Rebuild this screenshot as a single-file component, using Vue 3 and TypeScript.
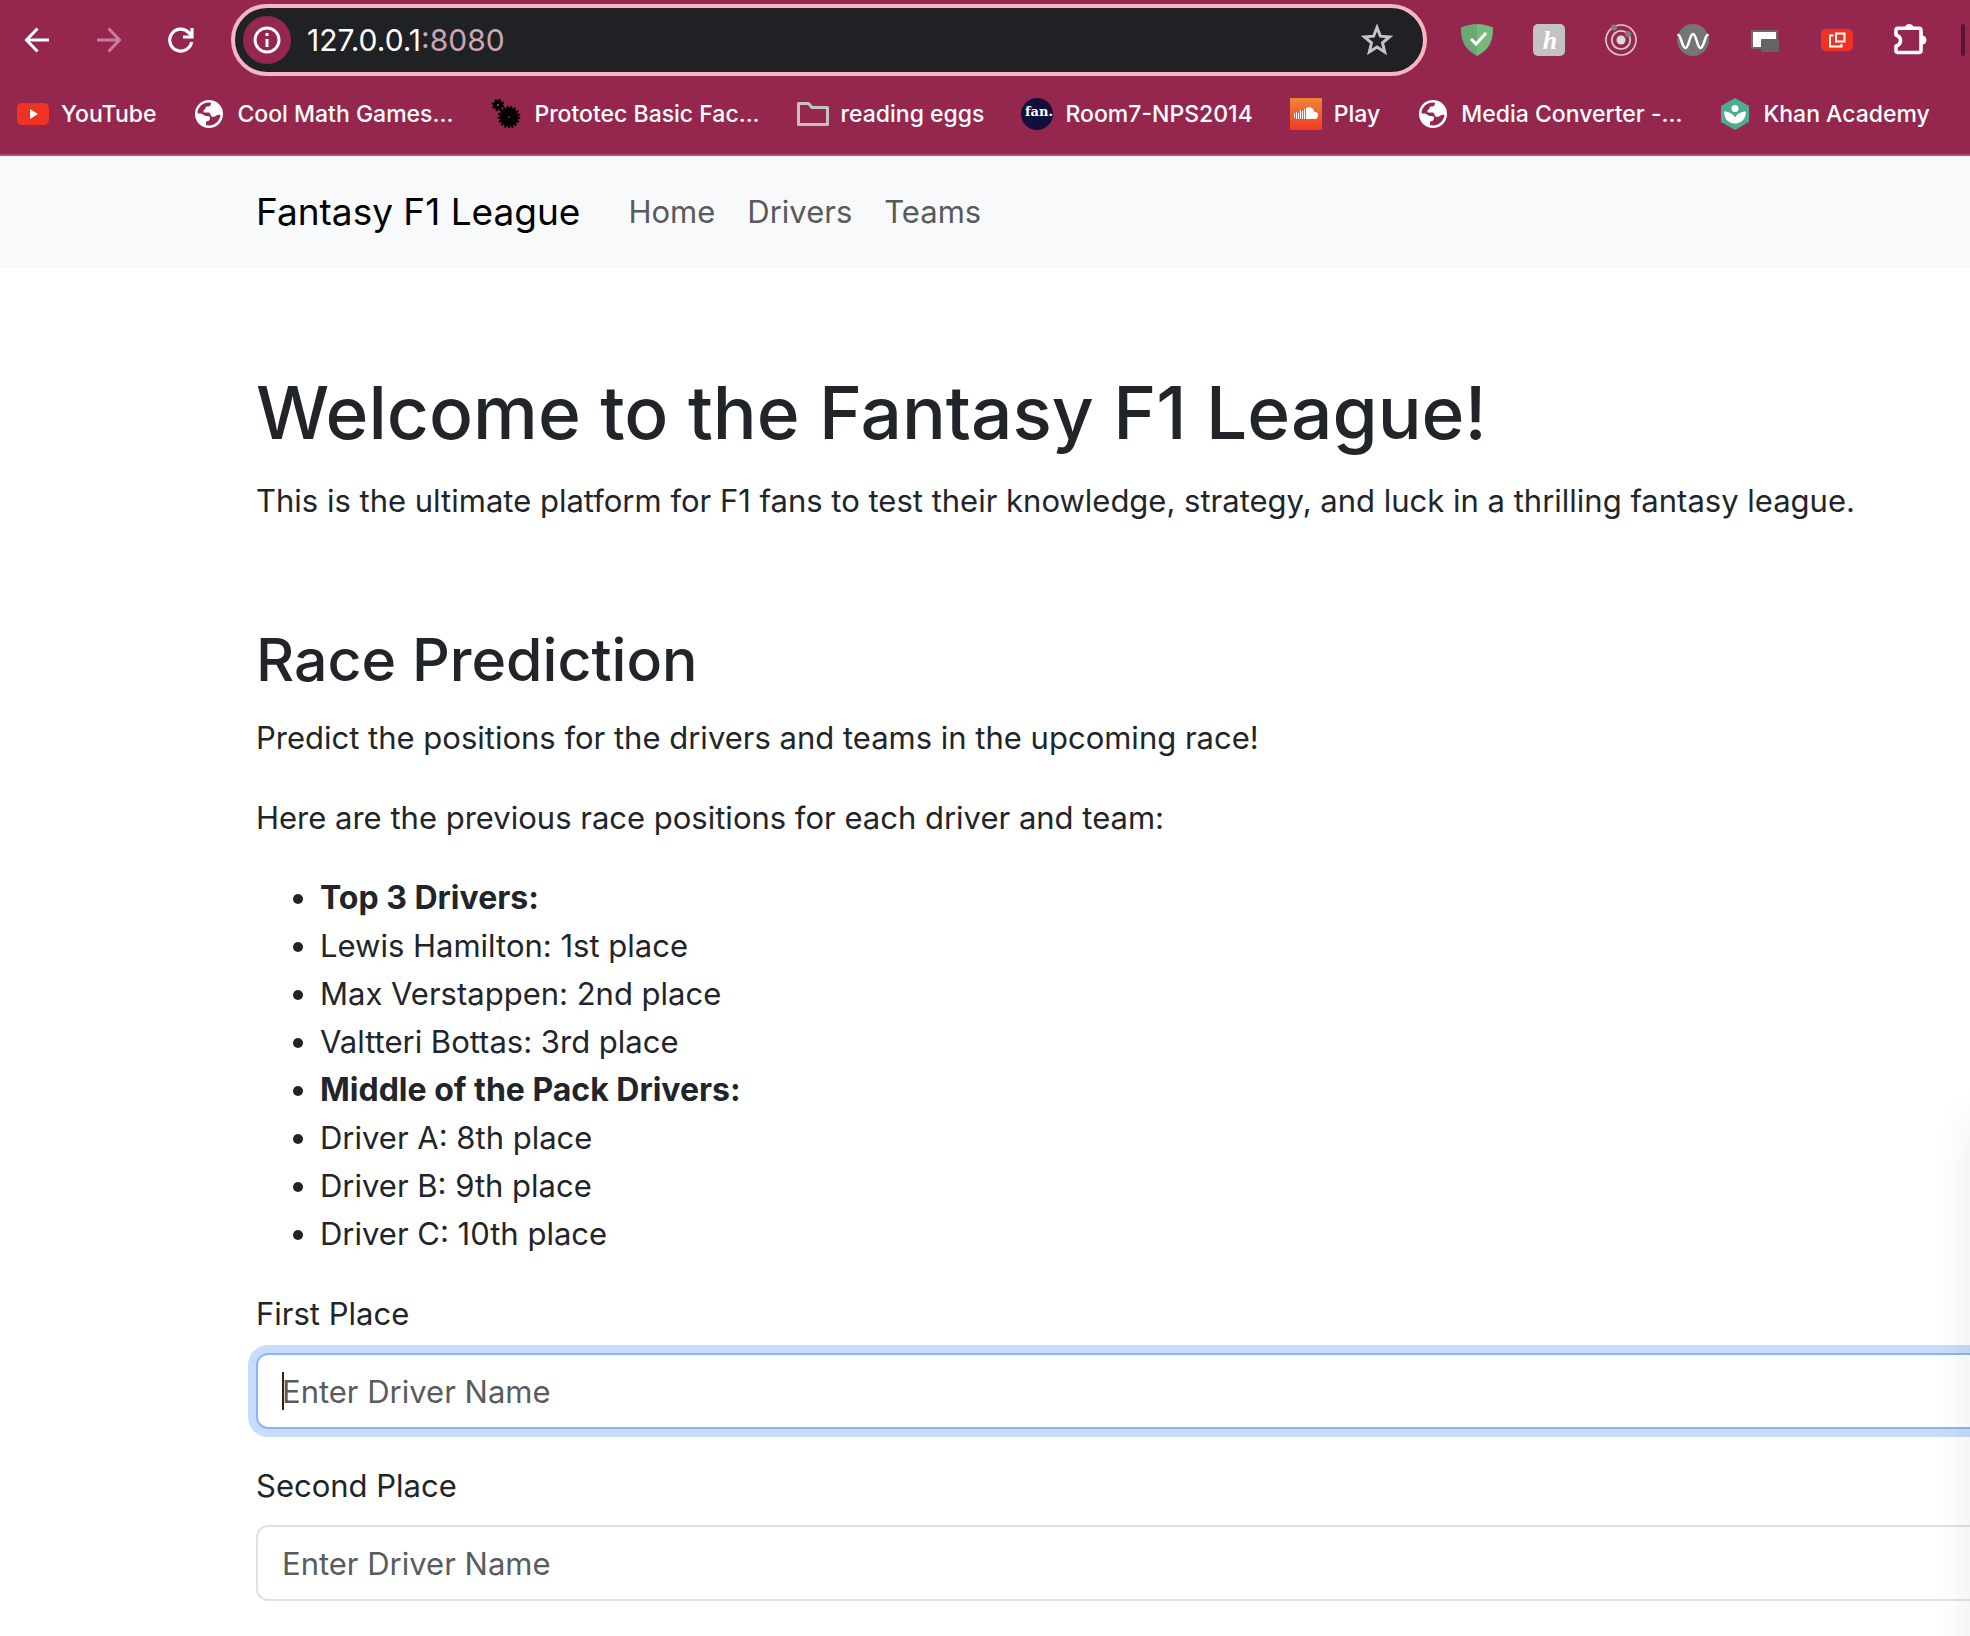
<script setup lang="ts">
import { ref } from 'vue'

interface Bookmark {
  label: string
  icon: 'youtube' | 'globe' | 'gears' | 'folder' | 'fan' | 'cloud' | 'khan'
}

const bookmarks: Bookmark[] = [
  { label: 'YouTube', icon: 'youtube' },
  { label: 'Cool Math Games...', icon: 'globe' },
  { label: 'Prototec Basic Fac...', icon: 'gears' },
  { label: 'reading eggs', icon: 'folder' },
  { label: 'Room7-NPS2014', icon: 'fan' },
  { label: 'Play', icon: 'cloud' },
  { label: 'Media Converter -...', icon: 'globe' },
  { label: 'Khan Academy', icon: 'khan' },
]

const links = ['Home', 'Drivers', 'Teams']

const positions = [
  { text: 'Top 3 Drivers:', heading: true },
  { text: 'Lewis Hamilton: 1st place' },
  { text: 'Max Verstappen: 2nd place' },
  { text: 'Valtteri Bottas: 3rd place' },
  { text: 'Middle of the Pack Drivers:', heading: true },
  { text: 'Driver A: 8th place' },
  { text: 'Driver B: 9th place' },
  { text: 'Driver C: 10th place' },
]

const host = ref('127.0.0.1')
const first = ref('')
const second = ref('')
</script>

<template>
  <div class="window">
    <header class="chrome">
      <div class="toolbar">
        <div class="group">
          <button class="icon-btn" type="button" aria-label="Back">
            <svg viewBox="0 0 32 32" fill="none" stroke="#fff" stroke-width="3"><path d="M28 16H6M16.500 4.500L5.500 16L16.500 27.500" /></svg>
          </button>
          <button class="icon-btn" type="button" aria-label="Forward">
            <svg viewBox="0 0 32 32" fill="none" stroke="#c57f9d" stroke-width="3"><path d="M4 16H26M15.500 4.500L26.500 16L15.500 27.500" /></svg>
          </button>
          <button class="icon-btn" type="button" aria-label="Reload">
            <svg viewBox="0 0 32 32" fill="none" stroke="#fff" stroke-width="3.200"><path d="M26.600 18A11 11 0 1 1 23.500 8.300L26 11" /><path d="M27 4V13H18" /></svg>
          </button>
        </div>

        <div class="omnibox">
          <button class="site-info" type="button" aria-label="Site information">
            <svg viewBox="0 0 32 32" fill="none" stroke="#fff"><circle cx="16" cy="16" r="12" stroke-width="3" /><path d="M16 15V23M16 9V12" stroke-width="3" /></svg>
          </button>
          <input v-model="host" class="host" type="text" aria-label="Address" /><span class="port">:8080</span>
          <button class="icon-btn star" type="button" aria-label="Bookmark this page">
            <svg viewBox="0 0 32 32" fill="none" stroke="#c3c3c3" stroke-width="3"><path d="M16 3.500L19.400 12.200L28.500 12.900L21.500 18.800L23.700 28L16 23.100L8.300 28L10.500 18.800L3.500 12.900L12.600 12.200Z" /></svg>
          </button>
        </div>

        <div class="group">
          <button class="icon-btn" type="button" aria-label="Ad blocker">
            <svg viewBox="0 0 32 32"><path d="M16 0C11 0 5 1.500 0 3.500C0 17 3 25 16 32Z" fill="#68aa74" /><path d="M16 0C21 0 27 1.500 32 3.500C32 17 29 25 16 32Z" fill="#7ab87a" /><path d="M10 15L15 20L25 9" fill="none" stroke="#fff" stroke-width="3" /></svg>
          </button>
          <button class="icon-btn" type="button" aria-label="Coupons">
            <svg viewBox="0 0 32 32"><rect width="32" height="32" rx="5" fill="#c3c3c3" /><text x="17" y="25" text-anchor="middle" class="script-glyph">h</text></svg>
          </button>
          <button class="icon-btn" type="button" aria-label="Tracker">
            <svg viewBox="0 0 32 32" fill="none"><circle cx="16" cy="16" r="15" stroke="#dcc9d2" stroke-width="1.600" /><circle cx="16" cy="16" r="9.200" stroke="#dcc9d2" stroke-width="1.800" /><circle cx="16" cy="16" r="4.500" fill="#dadada" /><circle cx="9" cy="3.500" r="3" fill="#808080" /><circle cx="23" cy="10" r="3" fill="#808080" /></svg>
          </button>
          <button class="icon-btn" type="button" aria-label="Wave">
            <svg viewBox="0 0 32 32" fill="none"><circle cx="16" cy="16" r="16" fill="#757575" /><path d="M1.500 11C4 11 5 24 8.500 24C12 24 12.500 10 16 10C19.500 10 20 24 23.500 24C27 24 28 11 30.500 11" stroke="#fff" stroke-width="2.600" stroke-linecap="round" /></svg>
          </button>
          <button class="icon-btn" type="button" aria-label="Windows">
            <svg viewBox="0 0 32 32"><rect x="3" y="7" width="25" height="17" fill="#fff" stroke="#6b6b6b" stroke-width="2" /><rect x="12" y="15" width="18" height="13" rx="1" fill="#646464" /></svg>
          </button>
          <button class="icon-btn" type="button" aria-label="Pop out">
            <svg viewBox="0 0 32 32" fill="none"><rect y="5" width="32" height="22" rx="5" fill="#ee3324" /><rect x="15" y="9.500" width="8.500" height="8" stroke="#fff" stroke-width="2" /><path d="M12.500 11.500H9V22.500H20.500V20" stroke="#fff" stroke-width="2" /></svg>
          </button>
          <button class="icon-btn" type="button" aria-label="Extensions">
            <svg viewBox="0 0 32 32" class="spill"><path d="M5 4.300H26Q28 4.300 28 6.300V26.500Q28 28.500 26 28.500H5Q3 28.500 3 26.500V22Q7.500 20.500 7.500 16.400Q7.500 12.500 3 11V6.300Q3 4.300 5 4.300Z" fill="none" stroke="#fff" stroke-width="3.600" stroke-linejoin="round" /><path d="M12 3A4.500 4.500 0 0 1 20.500 3Z" fill="#fff" /><path d="M29 11.500A4.500 4.500 0 0 1 29 20.500Z" fill="#fff" /></svg>
          </button>
          <span class="divider"></span>
        </div>
      </div>

      <nav class="bookmarks" aria-label="Bookmarks">
        <a v-for="b in bookmarks" :key="b.label" class="bookmark" href="#">
          <svg v-if="b.icon === 'youtube'" viewBox="0 0 32 32"><rect x="0" y="5" width="32" height="22" rx="5" fill="#ee3324" /><path d="M13 11V21L21 16Z" fill="#fff" /></svg>
          <svg v-else-if="b.icon === 'globe'" viewBox="0 0 32 32"><circle cx="16" cy="16" r="14" fill="#fff" /><path d="M4.500 15.500C4.500 9 10 4.500 16 4.500L18 5C18 8 16 8.500 14 8.500C12 8.500 13 12 10.500 12V14.500H15.500C18 14.500 17 19 20 19C23 19 24 16 27.500 17C26.500 23 22 27.500 16 27.500L13 27V23.500C15 23.500 17 22.500 17 20C17 18 15 18 13 18C11 18 9.500 15.500 8 15.500Z" fill="#95274f" /></svg>
          <svg v-else-if="b.icon === 'gears'" viewBox="0 0 32 32" fill="none" stroke="#000"><circle cx="19" cy="19" r="5.200" stroke-width="8.600" /><circle cx="19" cy="19" r="10" stroke-width="2.600" stroke-dasharray="2 1.696" /><circle cx="8" cy="7" r="3" stroke-width="3.400" /><circle cx="8" cy="7" r="5.200" stroke-width="2" stroke-dasharray="2.200 1.884" /></svg>
          <svg v-else-if="b.icon === 'folder'" viewBox="0 0 32 32" fill="none" stroke="#c3c3c3" stroke-width="3" stroke-linejoin="round"><path d="M1.500 5.500H11.500L15 9.500H30.500V26.500H1.500Z" /></svg>
          <svg v-else-if="b.icon === 'fan'" viewBox="0 0 32 32"><circle cx="16" cy="16" r="16" fill="#120f3c" /><text x="18" y="18" text-anchor="middle" class="fan-glyph">fan.</text></svg>
          <svg v-else-if="b.icon === 'cloud'" viewBox="0 0 32 32">
            <defs><linearGradient id="cloud-bg" x1="0" y1="0" x2="0" y2="1"><stop offset="0" stop-color="#f08636" /><stop offset="1" stop-color="#ee3a23" /></linearGradient></defs>
            <rect width="32" height="32" fill="url(#cloud-bg)" /><path d="M4.500 15V20M6.500 14V21M8.500 15V21M10.500 12V21M12.500 13V21M14.500 11V21" stroke="#fff" stroke-width="1" /><path d="M16 10C20 8 23.500 10 24.500 14C27 13.500 28.500 15.500 28 18C27.500 20 26.500 21 25 21H16Z" fill="#fff" />
          </svg>
          <svg v-else viewBox="0 0 32 32"><path d="M16 0L30 8V24L16 32L2 24V8Z" fill="#4fab90" /><circle cx="16" cy="10.500" r="3.500" fill="#fff" /><path d="M5 13.500C10 13.500 14 16 16 19.500C18 16 22 13.500 27 13.500C27 20 23 25.500 16 25.500C9 25.500 5 20 5 13.500Z" fill="#fff" /></svg>
          <span>{{ b.label }}</span>
        </a>
      </nav>
    </header>

    <div class="page">
      <nav class="navbar" aria-label="Main">
        <a class="brand" href="#">Fantasy F1 League</a>
        <a v-for="l in links" :key="l" class="nav-link" href="#">{{ l }}</a>
      </nav>

      <main class="content">
        <h1>Welcome to the Fantasy F1 League!</h1>
        <p>This is the ultimate platform for F1 fans to test their knowledge, strategy, and luck in a thrilling fantasy league.</p>

        <h2>Race Prediction</h2>
        <p>Predict the positions for the drivers and teams in the upcoming race!</p>
        <p>Here are the previous race positions for each driver and team:</p>
        <ul>
          <li v-for="p in positions" :key="p.text"><strong v-if="p.heading">{{ p.text }}</strong><template v-else>{{ p.text }}</template></li>
        </ul>

        <form @submit.prevent>
          <div class="field">
            <label for="first">First Place</label>
            <div class="control focused">
              <input id="first" v-model="first" type="text" placeholder="Enter Driver Name" />
              <span class="caret"></span>
            </div>
          </div>
          <div class="field">
            <label for="second">Second Place</label>
            <div class="control">
              <input id="second" v-model="second" type="text" placeholder="Enter Driver Name" />
            </div>
          </div>
        </form>
      </main>
      <div class="edge-shadow"></div>
    </div>
  </div>
</template>

<style>
body {
  margin: 0;
  background: #fff;
}
</style>

<style scoped>
.window {
  display: flex;
  flex-direction: column;
  min-height: 100vh;
  font-family: Inter, 'Liberation Sans', sans-serif;
  color: #212529;
}
button {
  padding: 0;
  border: 0;
  background: none;
}
a {
  text-decoration: none;
}
.chrome {
  background: #95274f;
  border-bottom: 2px solid #aa5279;
  overflow: hidden;
}
.toolbar {
  display: flex;
  align-items: center;
  gap: 34px;
  padding: 4px 5px 4px 21px;
}
.group {
  display: flex;
  align-items: center;
  gap: 40px;
}
.icon-btn {
  width: 32px;
  height: 32px;
  flex: none;
}
svg {
  display: block;
  width: 32px;
  height: 32px;
  flex: none;
}
.spill {
  overflow: visible;
}
.divider {
  width: 4px;
  height: 32px;
  margin-left: -4px;
  border-radius: 2px;
  background: #5b1234;
}
.omnibox {
  flex: 1;
  display: flex;
  align-items: center;
  height: 64px;
  padding-left: 8px;
  padding-right: 30px;
  border: 4px solid #f5b5c2;
  border-radius: 36px;
  background: #202124;
  font-size: 30px;
}
.site-info {
  display: flex;
  align-items: center;
  justify-content: center;
  width: 48px;
  height: 48px;
  margin-right: 16px;
  border-radius: 50%;
  background: #95274f;
}
.host {
  field-sizing: content;
  padding: 0;
  border: 0;
  outline: 0;
  background: none;
  font: inherit;
  color: #fff;
}
.port {
  color: #c9a7b8;
}
.star {
  margin-left: auto;
}
.script-glyph {
  font: italic 700 26px 'Liberation Serif', serif;
  fill: #fff;
}
.fan-glyph {
  font: 700 13px 'DejaVu Serif', serif;
  fill: #fff;
}
.bookmarks {
  display: flex;
  gap: 37px;
  padding: 18px 17px 24px;
}
.bookmark {
  display: flex;
  align-items: center;
  gap: 12px;
  height: 32px;
  font-size: 23px;
  font-weight: 500;
  white-space: nowrap;
  color: #fff;
}
.page {
  position: relative;
  flex: 1;
  overflow: hidden;
  font-size: 31px;
  line-height: 48px;
}
.navbar {
  display: flex;
  align-items: center;
  padding: 16px 256px;
  background: #f8f9fa;
}
.brand {
  margin-right: 32px;
  font-size: 37px;
  color: #000;
}
.nav-link {
  padding: 16px;
  color: #595a5b;
}
.content {
  margin: 97px -64px 0 256px;
}
h1,
h2 {
  margin: 0 0 16px;
  font-weight: 500;
}
h1 {
  font-size: 73px;
  line-height: 96px;
}
h2 {
  margin-top: 96px;
  font-size: 59px;
  line-height: 77px;
}
p {
  margin: 0 0 32px;
  white-space: nowrap;
}
ul {
  margin: 0 0 32px;
  padding-left: 64px;
}
strong {
  font-size: 32px;
  font-weight: 700;
}
.field {
  margin-bottom: 33px;
}
label {
  display: block;
  width: fit-content;
  margin-bottom: 15px;
}
.control {
  position: relative;
}
.control input {
  display: block;
  box-sizing: border-box;
  width: 100%;
  height: 76px;
  padding: 12px 24px;
  border: 2px solid #dee2e6;
  border-radius: 12px;
  outline: 0;
  background: #fff;
  font: inherit;
  color: #212529;
}
.control input::placeholder {
  color: #595c5f;
  opacity: 1;
}
.focused input {
  border-color: #8bb5f8;
  box-shadow: 0 0 0 8px #c8dcfc;
}
.caret {
  position: absolute;
  top: 19px;
  left: 26px;
  width: 2px;
  height: 38px;
  background: #212529;
}
.edge-shadow {
  position: absolute;
  top: 960px;
  bottom: -100px;
  right: -40px;
  width: 40px;
  border-radius: 16px;
  box-shadow: 0 0 40px rgba(0, 0, 0, 0.08);
  pointer-events: none;
}
</style>
